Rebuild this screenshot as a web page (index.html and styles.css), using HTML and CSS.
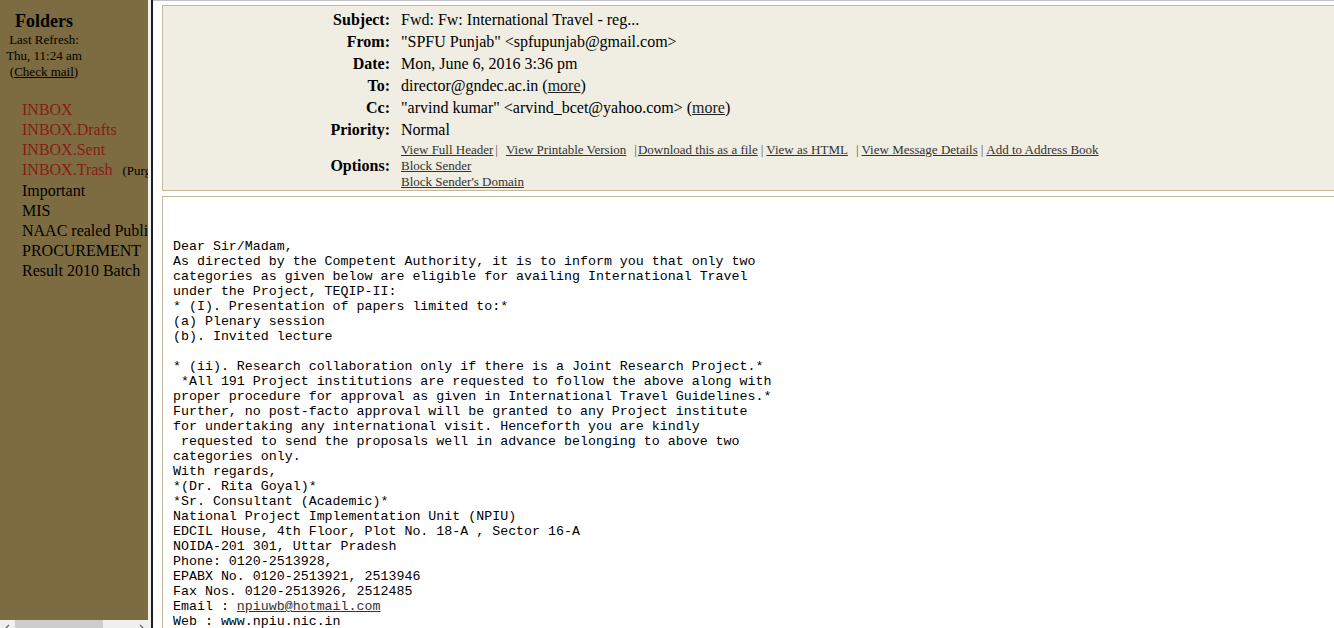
FILE: index.html
```html
<!DOCTYPE html>
<html>
<head>
<meta charset="utf-8">
<title>Read message</title>
<link rel="stylesheet" href="styles.css">
</head>
<body>
<div class="page">
  <aside class="folders">
    <div class="folders-head">
      <div class="title">Folders</div>
      <div class="refresh">Last Refresh:<br>Thu, 11:24 am<br>(<a href="#">Check mail</a>)</div>
    </div>
    <ul class="folder-list">
      <li><a class="sys" href="#">INBOX</a></li>
      <li><a class="sys" href="#">INBOX.Drafts</a></li>
      <li><a class="sys" href="#">INBOX.Sent</a></li>
      <li><a class="sys" href="#">INBOX.Trash</a><span class="purge">(Purge)</span></li>
      <li><a href="#">Important</a></li>
      <li><a href="#">MIS</a></li>
      <li><a href="#">NAAC realed Publications</a></li>
      <li><a href="#">PROCUREMENT</a></li>
      <li><a href="#">Result 2010 Batch</a></li>
    </ul>
    <div class="hscroll">
      <span class="arrow"><svg width="8" height="8" viewBox="0 0 8 8"><path d="M5 1 L2 4 L5 7" fill="none" stroke="#606060" stroke-width="1.2"/></svg></span>
      <span class="thumb"></span>
      <span class="track"></span>
      <span class="arrow"><svg width="8" height="8" viewBox="0 0 8 8"><path d="M3 1 L6 4 L3 7" fill="none" stroke="#606060" stroke-width="1.2"/></svg></span>
    </div>
  </aside>
  <div class="divider"></div>
  <main class="message">
    <div class="hdr">
      <div class="label">Subject:</div><div class="val">Fwd: Fw: International Travel - reg...</div>
      <div class="label">From:</div><div class="val">"SPFU Punjab" &lt;spfupunjab@gmail.com&gt;</div>
      <div class="label">Date:</div><div class="val">Mon, June 6, 2016 3:36 pm</div>
      <div class="label">To:</div><div class="val">director@gndec.ac.in (<a href="#">more</a>)</div>
      <div class="label">Cc:</div><div class="val">"arvind kumar" &lt;arvind_bcet@yahoo.com&gt; (<a href="#">more</a>)</div>
      <div class="label">Priority:</div><div class="val">Normal</div>
      <div class="label opt-label">Options:</div>
      <div class="opts">
        <div class="opt-line"><a href="#">View Full Header</a><span class="sep s1">|</span><a href="#">View Printable Version</a><span class="sep s2">|</span><a href="#">Download this as a file</a><span class="sep s3">|</span><a href="#" class="html">View as HTML</a><span class="sep s4">|</span><a href="#">View Message Details</a><span class="sep s3">|</span><a href="#">Add to Address Book</a></div>
        <div><a href="#">Block Sender</a></div>
        <div><a href="#">Block Sender's Domain</a></div>
      </div>
    </div>
    <div class="body">
<pre>Dear Sir/Madam,
As directed by the Competent Authority, it is to inform you that only two
categories as given below are eligible for availing International Travel
under the Project, TEQIP-II:
* (I). Presentation of papers limited to:*
(a) Plenary session
(b). Invited lecture

* (ii). Research collaboration only if there is a Joint Research Project.*
 *All 191 Project institutions are requested to follow the above along with
proper procedure for approval as given in International Travel Guidelines.*
Further, no post-facto approval will be granted to any Project institute
for undertaking any international visit. Henceforth you are kindly
 requested to send the proposals well in advance belonging to above two
categories only.
With regards,
*(Dr. Rita Goyal)*
*Sr. Consultant (Academic)*
National Project Implementation Unit (NPIU)
EDCIL House, 4th Floor, Plot No. 18-A , Sector 16-A
NOIDA-201 301, Uttar Pradesh
Phone: 0120-2513928,
EPABX No. 0120-2513921, 2513946
Fax Nos. 0120-2513926, 2512485
Email : <a href="#">npiuwb@hotmail.com</a>
Web : www.npiu.nic.in
</pre>
    </div>
  </main>
</div>
</body>
</html>
```
FILE: styles.css
```css
html, body {
  margin: 0;
  padding: 0;
  height: 100%;
}
body {
  font-family: "Liberation Serif", "Times New Roman", serif;
  color: #000;
  background: #fff;
  overflow: hidden;
}
a {
  color: inherit;
}
.page {
  display: flex;
  height: 628px;
}

/* left folder pane */
.folders {
  width: 148px;
  flex: none;
  background: #7d6c41;
  display: flex;
  flex-direction: column;
  overflow: hidden;
}
.folders-head {
  width: 88px;
  text-align: center;
  padding-top: 10px;
}
.title {
  font-weight: bold;
  font-size: 18px;
  line-height: 22px;
}
.refresh {
  font-size: 13px;
  line-height: 16px;
}
.refresh a {
  color: #000;
}
.folder-list {
  list-style: none;
  margin: 20px 0 0;
  padding: 0 0 0 22px;
  font-size: 16px;
  line-height: 20px;
  white-space: nowrap;
}
.folder-list a {
  color: #000;
  text-decoration: none;
}
.folder-list a.sys {
  color: #861d15;
}
.purge {
  font-size: 13px;
  margin-left: 10px;
}
.hscroll {
  margin-top: auto;
  height: 8px;
  background: #f0f0f0;
  display: flex;
  overflow: hidden;
}
.hscroll .arrow {
  width: 15px;
  flex: none;
  display: flex;
  justify-content: center;
  padding-top: 4px;
}
.hscroll .thumb {
  width: 88px;
  flex: none;
  background: #cdcdcd;
}
.hscroll .track {
  flex: 1;
}

.divider {
  width: 0;
  flex: none;
  border-left: 3px solid #f0f0f0;
  border-right: 2px solid #1e1e1e;
}

/* message pane */
.message {
  flex: 1;
  min-width: 0;
  border-top: 1px solid #c4c4c4;
  padding: 4px 0 0 9px;
  overflow: hidden;
}
.hdr {
  margin-right: -20px;
  border: 1px solid #c6ba9c;
  background: #f0ede2;
  padding-top: 3px;
  display: grid;
  grid-template-columns: 238px 1fr;
  font-size: 16px;
  line-height: 22px;
}
.label {
  font-weight: bold;
  text-align: right;
  padding-right: 11px;
}
.val a {
  color: #222;
}
.opt-label {
  align-self: center;
  margin-top: 1px;
}
.opts {
  padding-top: 1px;
  font-size: 13px;
  line-height: 16px;
  white-space: nowrap;
}
.opts a {
  color: #333;
}
.opts .sep {
  color: #555;
}
.opts .s1 {
  margin: 0 8px 0 2px;
}
.opts .s2 {
  margin: 0 1px 0 8px;
}
.opts .s3 {
  margin: 0 3px 0 3px;
}
.opts .s4 {
  margin: 0 3px 0 5px;
}
.opts a.html {
  padding-right: 3px;
}
.body {
  margin: 5px -20px 0 0;
  border: 1px solid #c6ba9c;
  background: #fff;
  padding: 42px 10px 0;
  min-height: 600px;
}
.body pre {
  margin: 0;
  font-family: "Liberation Mono", "Courier New", monospace;
  font-size: 13.3px;
  line-height: 15px;
  color: #000;
}
.body pre a {
  color: #333;
}
```
